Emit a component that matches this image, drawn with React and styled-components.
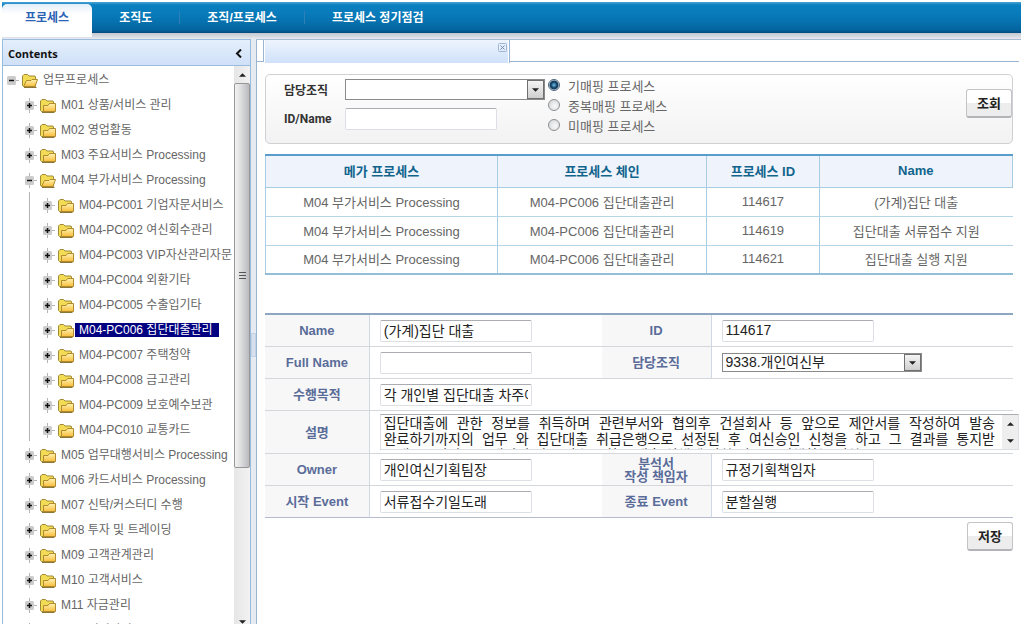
import React, { useState } from "react";
import styled, { createGlobalStyle, css } from "styled-components";

const GlobalStyle = createGlobalStyle`
  * {
    box-sizing: border-box;
  }

  body {
    margin: 0;
    overflow: hidden;
    background: #ffffff;
    color: #666666;
    font-family: "Liberation Sans", "Noto Sans CJK KR", sans-serif;
    font-size: 13px;
  }

  button, input, select, textarea {
    font-family: inherit;
  }
`;

const Page = styled.div`
  display: flex;
  flex-direction: column;
  height: 100vh;
  padding: 2px 3px 0 2px;
`;

const Nav = styled.nav`
  display: flex;
  align-items: stretch;
  height: 37px;
  flex: none;
  background: linear-gradient(
    #4ba3d3 0,
    #0a80c0 3px,
    #0879b8 14px,
    #04649f 28px,
    #034a7c 31px,
    #c3c8d1 31px,
    #d3d7de 34px,
    #e8ebf0 37px
  );
`;

const NavItem = styled.a`
  display: flex;
  align-items: center;
  height: 30px;
  padding: 0 28px 2px 27px;
  color: #ffffff;
  font-size: 12px;
  font-weight: 700;
  text-decoration: none;
  background: linear-gradient(#2f80b6, #2f80b6) right 9px / 1px 13px no-repeat;

  &:last-child {
    background: none;
  }

  ${(props) =>
    props.$active &&
    css`
      height: 33px;
      margin-top: 2px;
      padding: 0 23px 8px;
      color: #2a62b4;
      background: linear-gradient(#e4eef8, #ffffff 10px);
      border-radius: 5px 5px 0 0;
    `}
`;

const Body = styled.div`
  display: flex;
  flex: 1;
  min-height: 0;
`;

const Sidebar = styled.aside`
  display: flex;
  flex-direction: column;
  width: 249px;
  flex: none;
  border: 1px solid #99bbdd;
  border-bottom: none;
`;

const SidebarHeader = styled.div`
  display: flex;
  align-items: center;
  justify-content: space-between;
  height: 26px;
  flex: none;
  padding: 2px 8px 0 5px;
  border-bottom: 1px solid #99bbdd;
  background: linear-gradient(#e4effc, #cfe0f8);
`;

const SidebarTitle = styled.h1`
  margin: 0;
  color: #111111;
  font-family: "Open Sans", "Noto Sans", sans-serif;
  font-size: 11px;
  font-weight: 700;
`;

const IconButton = styled.button`
  display: flex;
  flex: none;
  padding: 0;
  border: none;
  background: none;
  cursor: pointer;
`;

const SidebarBody = styled.div`
  display: flex;
  flex: 1;
  min-height: 0;
`;

const Tree = styled.ul`
  flex: 1;
  min-width: 0;
  margin: 0;
  padding: 1px 0 0;
  overflow: hidden;
  list-style: none;
`;

const Branch = styled.ul`
  margin: 0;
  padding: 0 0 0 18px;
  list-style: none;
  background: ${(props) =>
    props.$line
      ? "linear-gradient(#b4b4b4, #b4b4b4) 8px 0 / 1px calc(100% - 1px) no-repeat"
      : "none"};
`;

const TreeRow = styled.div`
  display: flex;
  align-items: center;
  height: 25px;
  white-space: nowrap;
`;

const FolderIcon = styled.svg`
  flex: none;
  margin: 2px 1px 0 3px;
`;

const TreeLabel = styled.a`
  padding: 0 6px 0 4px;
  color: ${(props) => (props.$selected ? "#ffffff" : "#666666")};
  background: ${(props) => (props.$selected ? "#000080" : "none")};
  font-size: 12px;
  line-height: 14px;
  text-decoration: none;
`;

const ScrollTrack = styled.div`
  display: flex;
  flex-direction: column;
  width: 16px;
  flex: none;
  background: linear-gradient(90deg, #e6e6e6, #f2f2f2);
`;

const ScrollEnd = styled.div`
  display: flex;
  align-items: center;
  justify-content: center;
  height: ${(props) => props.$height}px;
  flex: none;
`;

const ScrollThumb = styled.div`
  display: flex;
  flex-direction: column;
  align-items: center;
  justify-content: center;
  gap: 1px;
  height: 69%;
  border: 1px solid #979797;
  border-radius: 2px;
  background: linear-gradient(90deg, #f2f2f2, #dcdcde 45%, #b9babf);
`;

const ScrollGrip = styled.span`
  width: 7px;
  height: 2px;
  border-top: 1px solid #555555;
`;

const ScrollSpace = styled.div`
  flex: 1;
`;

const Splitter = styled.div`
  display: flex;
  align-items: center;
  width: 5px;
  flex: none;
  background: #e6ebf2;
`;

const SplitterHandle = styled.span`
  width: 5px;
  height: 24px;
  margin-top: 26px;
  border: 1px solid #c3d2e4;
  background: #d7e1ee;
`;

const Main = styled.main`
  flex: 1;
  min-width: 0;
  border-top: 1px solid #a9bbd2;
  border-left: 1px solid #99b5d2;
`;

const TabStrip = styled.div`
  display: flex;
  height: 23px;
`;

const TabStub = styled.div`
  width: 7px;
  border-right: 1px solid #99b5d2;
  border-bottom: 1px solid #99b5d2;
  margin-bottom: 1px;
`;

const Tab = styled.div`
  display: flex;
  justify-content: flex-end;
  width: 246px;
  padding: 3px 2px 0 0;
  background: linear-gradient(#eef4fd, #cfe1fa) 1px 0 / 243px 100% no-repeat;
  border-right: 1px solid #99b5d2;
`;

const TabRest = styled.div`
  flex: 1;
  margin: 0 2px 1px 0;
  border-bottom: 1px solid #99b5d2;
`;

const Content = styled.div`
  padding: 11px 8px 0;
`;

const SearchPanel = styled.form`
  display: flex;
  align-items: flex-start;
  height: 70px;
  border: 1px solid #cfcfd4;
  border-radius: 5px;
  background: linear-gradient(#ffffff, #f2f2f2);
`;

const SearchFields = styled.div`
  display: grid;
  grid-template-columns: 61px 199px;
  grid-template-rows: 29px 30px;
  align-items: center;
  padding-left: 18px;
`;

const SearchLabel = styled.label`
  color: #333333;
  font-family: Roboto, "Noto Sans CJK KR", sans-serif;
  font-size: 12px;
  font-weight: 700;
`;

const RadioGroup = styled.div`
  flex: 1;
  padding-left: 4px;
`;

const RadioLabel = styled.label`
  display: flex;
  align-items: center;
  gap: 8px;
  height: 20px;
`;

const Radio = styled.input`
  appearance: none;
  width: 12px;
  height: 12px;
  margin: 0;
  border: 1px solid #8e8f8f;
  border-radius: 50%;
  background: radial-gradient(circle at 60% 60%, #f8f8f8, #cfd3d8);

  &:checked {
    border-color: #49637a;
    background: radial-gradient(
      circle,
      #6fc3ec 0,
      #123f63 3px,
      #163f60 4px,
      #e6edf2 5px
    );
  }
`;

const TextInput = styled.input`
  display: block;
  width: 152px;
  height: 22px;
  padding: 0 3px 2px;
  border: 1px solid #dcdfe4;
  border-top-color: #abadb3;
  border-radius: 2px;
  background: #ffffff;
  color: #222222;
  font-size: 14px;
`;

const SelectFrame = styled.div`
  display: grid;
  width: 200px;
  height: ${(props) => (props.$tall ? 21 : 19)}px;
  border: 1px solid #8a8a8a;
  background: #ffffff;
`;

const SelectInput = styled.select`
  grid-area: 1 / 1;
  appearance: none;
  min-width: 0;
  padding: 0 20px 1px 3px;
  border: none;
  background: none;
  color: #222222;
  font-size: 14px;
  line-height: 16px;
`;

const SelectArrow = styled.span`
  grid-area: 1 / 1;
  justify-self: end;
  display: flex;
  align-items: center;
  justify-content: center;
  width: 17px;
  border: 1px solid #707070;
  background: linear-gradient(#f4f4f4, #cfcfcf);
  pointer-events: none;
`;

const Button = styled.button`
  width: 46px;
  height: 29px;
  flex: none;
  padding: 0 0 2px;
  border: 1px solid #c4c4c8;
  border-bottom: 2px solid #b4b4b8;
  border-radius: 3px;
  background: linear-gradient(#ffffff 50%, #ededed 50%);
  color: #222222;
  font-size: 13px;
  font-weight: 700;
  cursor: pointer;
`;

const SearchButton = styled(Button)`
  margin-top: 14px;
`;

const ListTable = styled.table`
  width: 100%;
  margin-top: 10px;
  table-layout: fixed;
  border-collapse: separate;
  border-spacing: 0;
  border-top: 2px solid #5b9dca;
  border-bottom: 2px solid #94bdd6;

  th, td {
    padding: 0 0 2px;
    text-align: center;
    border-left: 1px solid #a9cce2;
  }

  th {
    height: 32px;
    border-bottom: 1px solid #a9cce2;
    background: #eff4fc;
    color: #11648c;
    font-weight: 700;
  }

  th:last-child {
    border-right: 1px solid #a9cce2;
  }

  td {
    height: 29px;
    border-bottom: 1px solid #b5d5e8;
    color: #666666;
  }

  tr:last-child td {
    height: 27px;
    border-bottom: none;
  }
`;

const DetailTable = styled.table`
  width: 100%;
  margin-top: 38px;
  table-layout: fixed;
  border-collapse: separate;
  border-spacing: 0;
  border-top: 2px solid #8fa6c1;

  th, td {
    height: 32px;
    padding: 0;
    border-bottom: 1px solid #d4d7dc;
  }

  th {
    border-right: 1px solid #d0d8e4;
    background: #f7f7f8;
    color: #5a6c98;
    font-weight: 700;
    line-height: 13px;
    text-align: center;
  }

  td {
    padding-left: 10px;
  }

  tr:last-child th, tr:last-child td {
    border-bottom-color: #b4bccb;
  }
`;

const MemoFrame = styled.div`
  display: flex;
  width: calc(100% + 6px);
  height: 36px;
  margin: 3px 0;
  border: 1px solid #dcdfe4;
  border-top-color: #abadb3;
`;

const Memo = styled.textarea`
  flex: 1;
  min-width: 0;
  height: 34px;
  padding: 0 7px 0 3px;
  border: none;
  outline: none;
  overflow: hidden;
  resize: none;
  color: #222222;
  font-size: 14px;
  line-height: 16px;
  text-align: justify;
  word-break: keep-all;
`;

const MemoScroll = styled.div`
  display: flex;
  flex-direction: column;
  align-items: center;
  justify-content: space-around;
  width: 16px;
  background: #eeeeee;
`;

const Actions = styled.div`
  display: flex;
  justify-content: flex-end;
  padding-top: 4px;
`;

function Arrow({ up, width = 7, color = "#222" }) {
  return (
    <svg width={width} height="4" viewBox="0 0 8 4" aria-hidden="true">
      <path d={up ? "M0 4L4 0L8 4Z" : "M0 0H8L4 4Z"} fill={color} />
    </svg>
  );
}

function Toggle({ open, root }) {
  return (
    <svg width="16" height="25" viewBox="0 0 16 25" aria-hidden="true">
      <path d="M8 13.5H16" stroke="#b4b4b4" />
      {!root && <path d="M8.5 6V21" stroke="#b4b4b4" />}
      <rect x="4" y="9" width="9" height="9" rx="1.5" fill="#cccccc" />
      <path d="M6 13.5H11" stroke="#111" strokeWidth="1.5" />
      {!open && <path d="M8.5 11V16" stroke="#111" strokeWidth="1.5" />}
    </svg>
  );
}

function Folder({ open }) {
  return (
    <FolderIcon width="16" height="15" viewBox="0 0 16 15" aria-hidden="true">
      <defs>
        <linearGradient id="folder" x1="0" y1="0" x2="0" y2="1">
          <stop offset="0" stopColor="#fff3b4" />
          <stop offset="1" stopColor="#f8bd3a" />
        </linearGradient>
      </defs>
      <path
        d="M.5 12.5V3L2 1.5H5.5L7 3H13L13.5 4V13.5H1.5Z"
        fill="#f3dc55"
        stroke="#a08a35"
      />
      <path
        d={
          open
            ? "M1.5 13.5L4.5 7.5H9L10 6.5H15.5L13 13.5Z"
            : "M3.5 13.5V7.5H8L9.5 5.5H15.5V13.5Z"
        }
        fill="url(#folder)"
        stroke="#b08a2c"
      />
      <path d="M2 14.5H14.5" stroke="#8a7738" />
    </FolderIcon>
  );
}

const processes = [
  { name: "M01 상품/서비스 관리" },
  { name: "M02 영업활동" },
  { name: "M03 주요서비스 Processing" },
  {
    name: "M04 부가서비스 Processing",
    children: [
      { name: "M04-PC001 기업자문서비스" },
      { name: "M04-PC002 여신회수관리" },
      { name: "M04-PC003 VIP자산관리자문" },
      { name: "M04-PC004 외환기타" },
      { name: "M04-PC005 수출입기타" },
      { name: "M04-PC006 집단대출관리" },
      { name: "M04-PC007 주택청약" },
      { name: "M04-PC008 금고관리" },
      { name: "M04-PC009 보호예수보관" },
      { name: "M04-PC010 교통카드" },
    ],
  },
  { name: "M05 업무대행서비스 Processing" },
  { name: "M06 카드서비스 Processing" },
  { name: "M07 신탁/커스터디 수행" },
  { name: "M08 투자 및 트레이딩" },
  { name: "M09 고객관계관리" },
  { name: "M10 고객서비스" },
  { name: "M11 자금관리" },
  { name: "M12 여신관리" },
];

const tree = { name: "업무프로세스", children: processes };

const rows = [
  ["114617", "(가계)집단 대출"],
  ["114619", "집단대출 서류접수 지원"],
  ["114621", "집단대출 실행 지원"],
];

// the zero-width space lets the long compound break under keep-all
const description =
  "집단대출에 관한 정보를 취득하며 관련부서와 협의후 건설회사 등 앞으로 제안서를 작성하여 발송 완료하기까지의 업무 와 집단대출 취급은행으로 선정된 후 여신승인 신청을 하고 그 결과를 통지받\u200b은내용을바탕으로 개인별 서류 접수를 하고 대출 실행에 관한 업무를 진행하는 절차";

function TreeNode({ node, level = 0, selected, onSelect }) {
  const [open, setOpen] = useState(Boolean(node.children));

  return (
    <li>
      <TreeRow>
        <IconButton
          type="button"
          aria-label={node.name}
          aria-expanded={open}
          onClick={() => setOpen(!open)}
        >
          <Toggle open={open} root={level === 0} />
        </IconButton>
        <Folder open={open} />
        <TreeLabel
          href="#"
          $selected={selected === node.name}
          onClick={() => onSelect(node.name)}
        >
          {node.name}
        </TreeLabel>
      </TreeRow>
      {open && node.children && (
        <Branch $line={level === 1}>
          {node.children.map((child) => (
            <TreeNode
              key={child.name}
              node={child}
              level={level + 1}
              selected={selected}
              onSelect={onSelect}
            />
          ))}
        </Branch>
      )}
    </li>
  );
}

function Select({ id, value, tall }) {
  return (
    <SelectFrame $tall={tall}>
      <SelectInput id={id} defaultValue={value}>
        <option>{value}</option>
      </SelectInput>
      <SelectArrow>
        <Arrow />
      </SelectArrow>
    </SelectFrame>
  );
}

function ContentsPanel() {
  const [selected, setSelected] = useState("M04-PC006 집단대출관리");

  return (
    <Sidebar>
      <SidebarHeader>
        <SidebarTitle>Contents</SidebarTitle>
        <IconButton type="button" aria-label="Collapse">
          <svg width="7" height="9" viewBox="0 0 7 9">
            <path d="M6 .5L2 4.5L6 8.5" fill="none" stroke="#111" strokeWidth="2" />
          </svg>
        </IconButton>
      </SidebarHeader>
      <SidebarBody>
        <Tree>
          <TreeNode node={tree} selected={selected} onSelect={setSelected} />
        </Tree>
        <ScrollTrack>
          <ScrollEnd $height={17}>
            <Arrow up />
          </ScrollEnd>
          <ScrollThumb>
            <ScrollGrip />
            <ScrollGrip />
            <ScrollGrip />
          </ScrollThumb>
          <ScrollSpace />
          <ScrollEnd $height={4}>
            <Arrow />
          </ScrollEnd>
        </ScrollTrack>
      </SidebarBody>
    </Sidebar>
  );
}

function SearchBox() {
  return (
    <SearchPanel onSubmit={(e) => e.preventDefault()}>
      <SearchFields>
        <SearchLabel htmlFor="org">담당조직</SearchLabel>
        <Select id="org" value="" tall />
        <SearchLabel htmlFor="keyword">ID/Name</SearchLabel>
        <TextInput id="keyword" />
      </SearchFields>
      <RadioGroup>
        <RadioLabel>
          <Radio type="radio" name="mapping" defaultChecked />
          기매핑 프로세스
        </RadioLabel>
        <RadioLabel>
          <Radio type="radio" name="mapping" />
          중복매핑 프로세스
        </RadioLabel>
        <RadioLabel>
          <Radio type="radio" name="mapping" />
          미매핑 프로세스
        </RadioLabel>
      </RadioGroup>
      <SearchButton>조회</SearchButton>
    </SearchPanel>
  );
}

function ProcessList() {
  return (
    <ListTable>
      <colgroup>
        <col style={{ width: "31%" }} />
        <col style={{ width: "28%" }} />
        <col style={{ width: "15%" }} />
        <col />
      </colgroup>
      <thead>
        <tr>
          <th>메가 프로세스</th>
          <th>프로세스 체인</th>
          <th>프로세스 ID</th>
          <th>Name</th>
        </tr>
      </thead>
      <tbody>
        {rows.map(([id, name]) => (
          <tr key={id}>
            <td>M04 부가서비스 Processing</td>
            <td>M04-PC006 집단대출관리</td>
            <td>{id}</td>
            <td>{name}</td>
          </tr>
        ))}
      </tbody>
    </ListTable>
  );
}

function Field({ id, label, value }) {
  return (
    <>
      <th>
        <label htmlFor={id}>{label}</label>
      </th>
      <td>
        <TextInput id={id} defaultValue={value} />
      </td>
    </>
  );
}

function ProcessDetail() {
  return (
    <DetailTable>
      <colgroup>
        <col style={{ width: "14%" }} />
        <col style={{ width: "31%" }} />
        <col style={{ width: "14.7%" }} />
        <col />
      </colgroup>
      <tbody>
        <tr>
          <Field id="name" label="Name" value="(가계)집단 대출" />
          <Field id="pid" label="ID" value="114617" />
        </tr>
        <tr>
          <Field id="fullname" label="Full Name" value="" />
          <th>
            <label htmlFor="dept">담당조직</label>
          </th>
          <td>
            <Select id="dept" value="9338.개인여신부" />
          </td>
        </tr>
        <tr>
          <th>
            <label htmlFor="purpose">수행목적</label>
          </th>
          <td colSpan="3">
            <TextInput id="purpose" defaultValue="각 개인별 집단대출 차주에 대한 심사" />
          </td>
        </tr>
        <tr>
          <th>
            <label htmlFor="memo">설명</label>
          </th>
          <td colSpan="3">
            <MemoFrame>
              <Memo id="memo" defaultValue={description} />
              <MemoScroll>
                <Arrow up />
                <Arrow />
              </MemoScroll>
            </MemoFrame>
          </td>
        </tr>
        <tr>
          <Field id="owner" label="Owner" value="개인여신기획팀장" />
          <Field
            id="analyst"
            label={
              <>
                분석서
                <br />
                작성 책임자
              </>
            }
            value="규정기획책임자"
          />
        </tr>
        <tr>
          <Field id="start" label="시작 Event" value="서류접수기일도래" />
          <Field id="end" label="종료 Event" value="분할실행" />
        </tr>
      </tbody>
    </DetailTable>
  );
}

function App() {
  return (
    <Page>
      <GlobalStyle />
      <Nav>
        <NavItem href="#" $active>
          프로세스
        </NavItem>
        <NavItem href="#">조직도</NavItem>
        <NavItem href="#">조직/프로세스</NavItem>
        <NavItem href="#">프로세스 정기점검</NavItem>
      </Nav>
      <Body>
        <ContentsPanel />
        <Splitter>
          <SplitterHandle />
        </Splitter>
        <Main>
          <TabStrip>
            <TabStub />
            <Tab>
              <IconButton type="button" aria-label="Close">
                <svg width="9" height="9" viewBox="0 0 9 9">
                  <rect x=".5" y=".5" width="8" height="8" rx="1" fill="none" stroke="#9fb6d4" />
                  <path d="M2.5 2.5L6.5 6.5M6.5 2.5L2.5 6.5" stroke="#6f8db3" />
                </svg>
              </IconButton>
            </Tab>
            <TabRest />
          </TabStrip>
          <Content>
            <SearchBox />
            <ProcessList />
            <ProcessDetail />
            <Actions>
              <Button type="button">저장</Button>
            </Actions>
          </Content>
        </Main>
      </Body>
    </Page>
  );
}

export default App;
